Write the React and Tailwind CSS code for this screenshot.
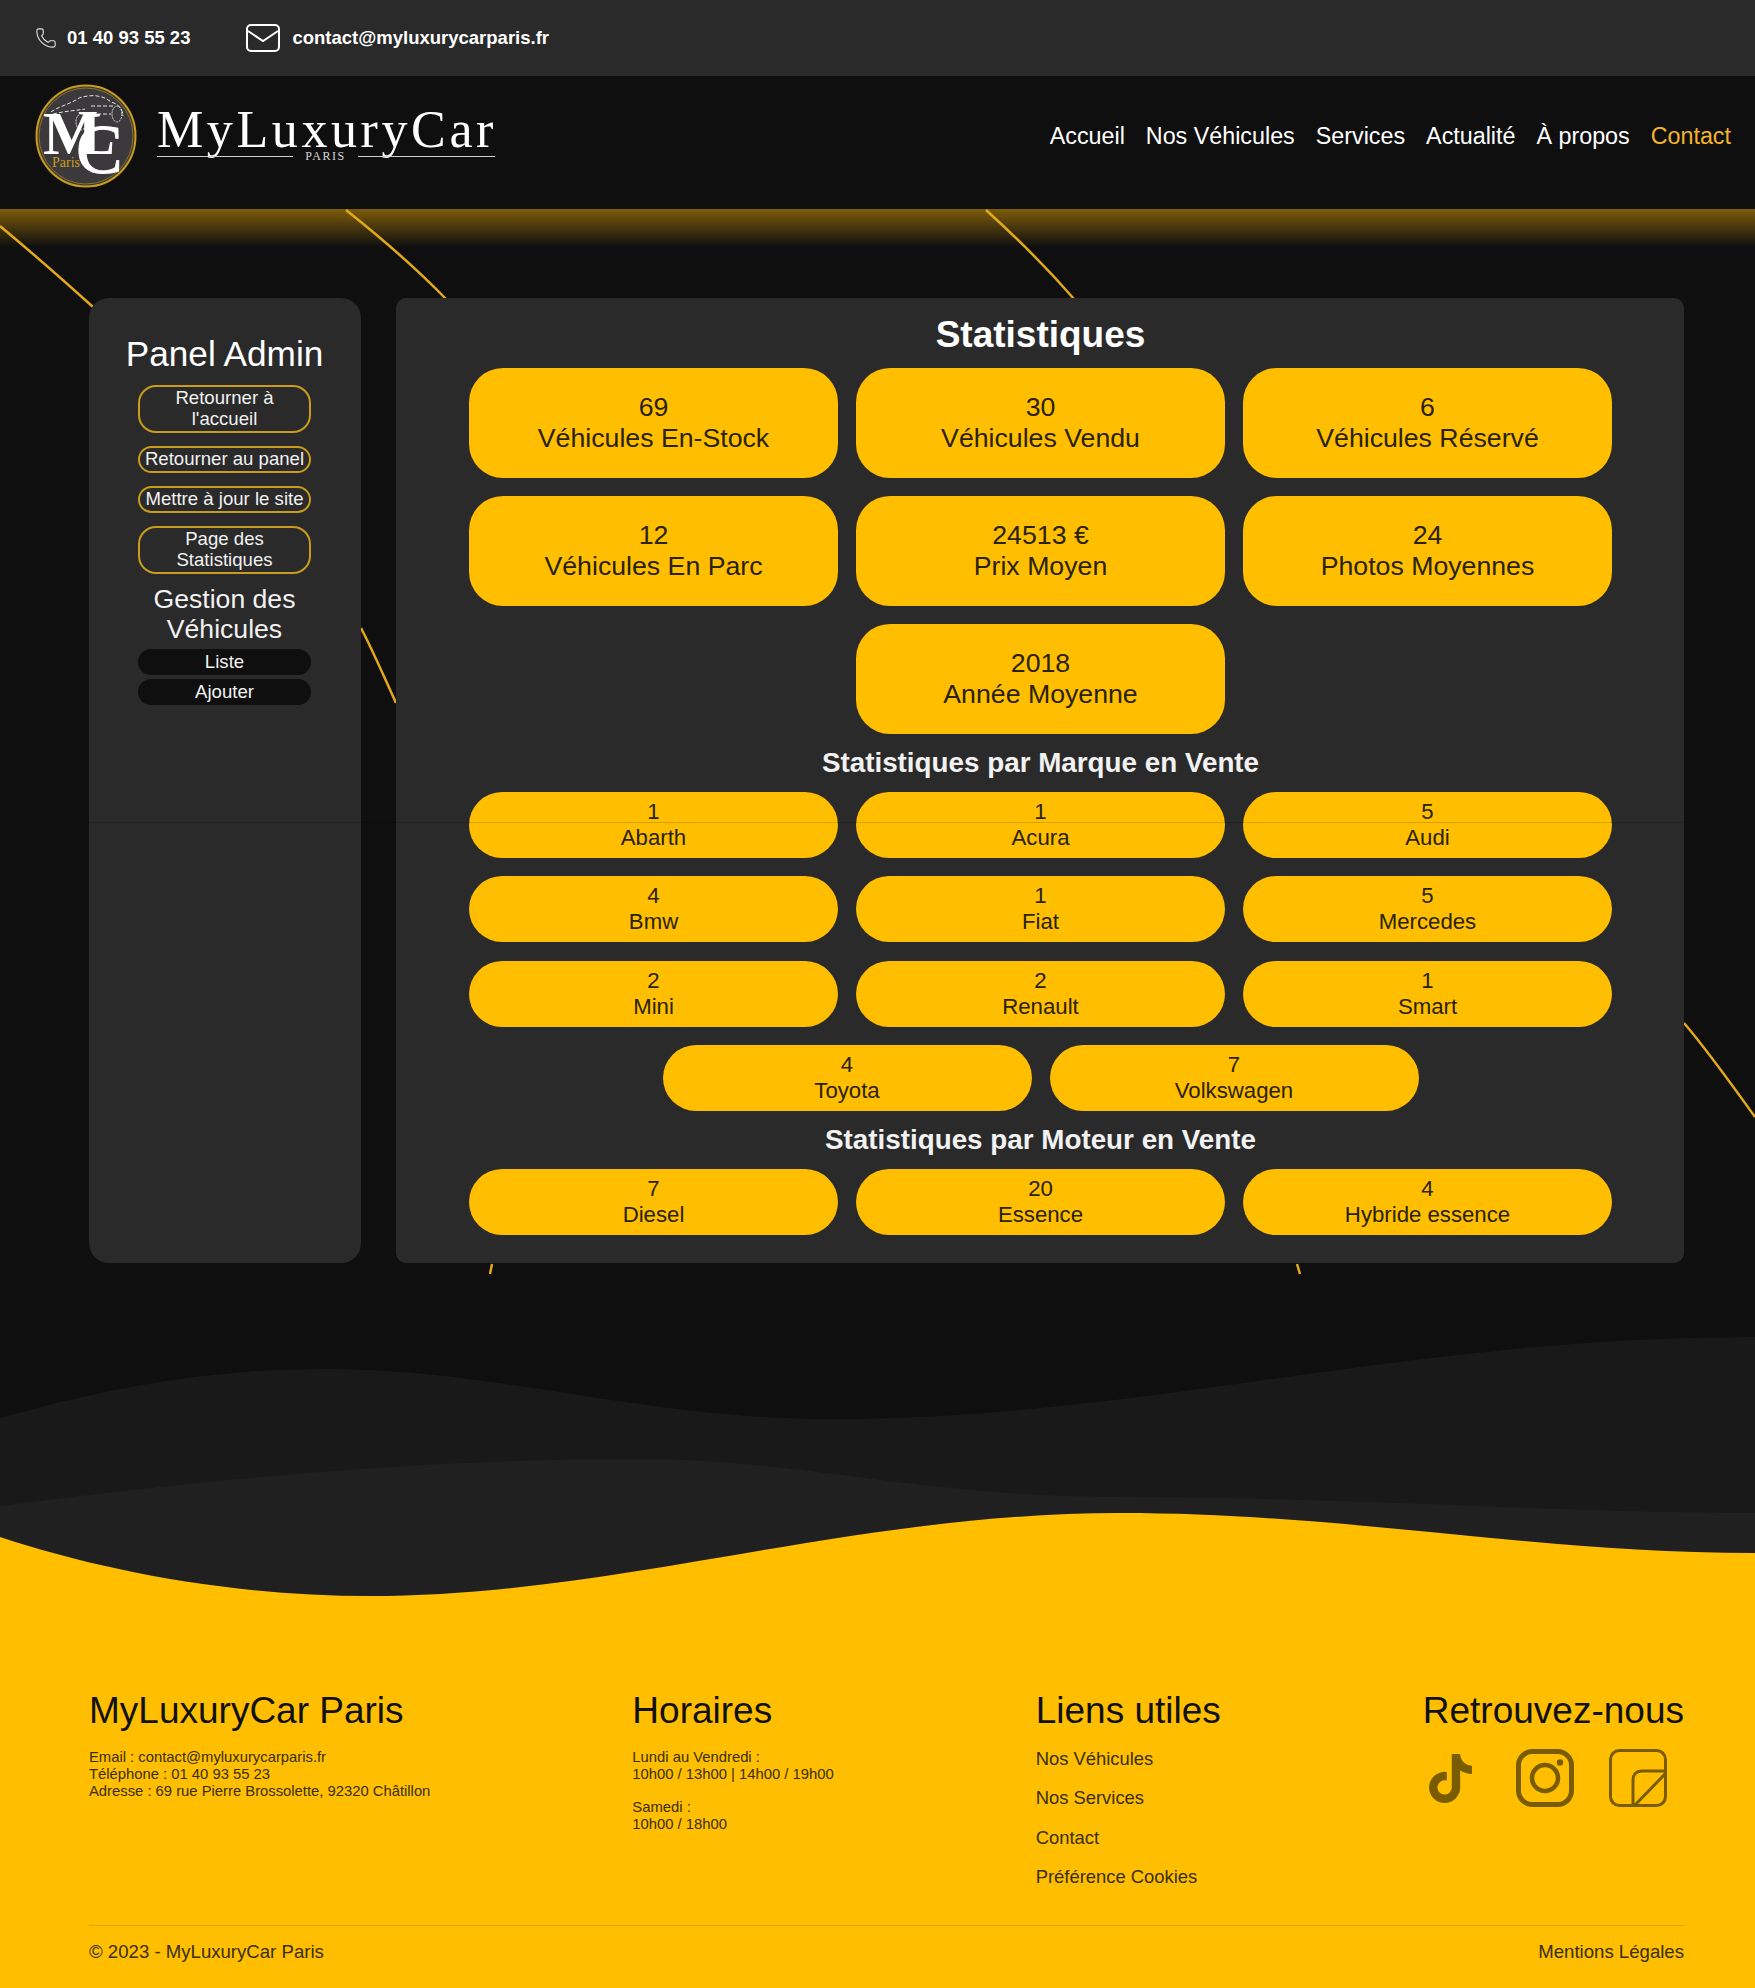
import { Phone } from "lucide-react";
import { FaTiktok } from "react-icons/fa";

const topStats = [
  ["69", "Véhicules En-Stock"],
  ["30", "Véhicules Vendu"],
  ["6", "Véhicules Réservé"],
  ["12", "Véhicules En Parc"],
  ["24513 €", "Prix Moyen"],
  ["24", "Photos Moyennes"],
  ["2018", "Année Moyenne"],
];

const brandStats = [
  ["1", "Abarth"],
  ["1", "Acura"],
  ["5", "Audi"],
  ["4", "Bmw"],
  ["1", "Fiat"],
  ["5", "Mercedes"],
  ["2", "Mini"],
  ["2", "Renault"],
  ["1", "Smart"],
  ["4", "Toyota"],
  ["7", "Volkswagen"],
];

const engineStats = [
  ["7", "Diesel"],
  ["20", "Essence"],
  ["4", "Hybride essence"],
];

const navLinks = ["Accueil", "Nos Véhicules", "Services", "Actualité", "À propos"];
const footerLinks = ["Nos Véhicules", "Nos Services", "Contact", "Préférence Cookies"];

const BigCard = ({ value, label }) => (
  <div className="flex h-[110px] w-[369px] flex-col items-center justify-center rounded-[34px] bg-[#ffbf00] text-[26.7px] leading-[31px] text-[#2a2205]">
    <span>{value}</span>
    <span>{label}</span>
  </div>
);

const SmallCard = ({ value, label }) => (
  <div className="flex h-[66px] w-[369px] flex-col items-center justify-center rounded-[33px] bg-[#ffbf00] text-[22.2px] leading-[26px] text-[#2a2205]">
    <span>{value}</span>
    <span>{label}</span>
  </div>
);

const OutlineButton = ({ children }) => (
  <div className="w-full whitespace-nowrap rounded-[18px] border-2 border-[#c99c1e] pb-[2px] text-center text-[18.6px] leading-[21px] text-[#f2f2f2]">
    {children}
  </div>
);

const DarkButton = ({ children }) => (
  <div className="flex h-[26px] w-full items-center justify-center rounded-[13px] bg-[#0f0f0f] text-[18.6px] text-[#f2f2f2]">
    {children}
  </div>
);

const Logo = () => (
  <div className="flex items-center">
    <svg width="102" height="104" viewBox="0 0 102 104" className="shrink-0">
      <ellipse cx="51" cy="52" rx="49.5" ry="50.5" fill="#3b393b" stroke="#c99c1e" strokeWidth="2" />
      <ellipse cx="51" cy="52" rx="47" ry="48" fill="none" stroke="#8f7220" strokeWidth="1" />
      <path
        d="M16 28 C24 22 36 20 44 14 C56 10 68 11 76 18 C84 20 88 26 88 32 M18 30 C30 27 38 27 50 25 M56 22 H80 M62 30 H76"
        fill="none"
        stroke="#e8e8e8"
        strokeWidth="1"
        strokeDasharray="4 2"
      />
      <ellipse cx="82" cy="30" rx="5" ry="8" fill="none" stroke="#e8e8e8" strokeWidth="1" strokeDasharray="2 1" />
      <ellipse cx="46" cy="38" rx="5" ry="8" fill="none" stroke="#e8e8e8" strokeWidth="1" strokeDasharray="2 1" />
      <text x="17" y="83" fontFamily="'Liberation Serif', serif" fontSize="14" fill="#c99c1e">
        Paris
      </text>
      <text x="42" y="70" fontFamily="'Liberation Serif', serif" fontSize="64" fill="#fff">
        L
      </text>
      <text x="8" y="70" fontFamily="'Liberation Serif', serif" fontSize="62" fontWeight="700" fill="#fff">
        M
      </text>
      <text x="41" y="89" fontFamily="'Liberation Serif', serif" fontSize="70" fill="#fff" stroke="#fff" strokeWidth="0.8">
        C
      </text>
    </svg>
    <div className="ml-[20px] flex w-[338px] flex-col font-['Liberation_Serif',serif] text-white">
      <span className="-mt-[1px] whitespace-nowrap text-[52px] leading-[41px] tracking-[3.6px]">MyLuxuryCar</span>
      <div className="flex items-center">
        <span className="h-px w-[136px] bg-[#cfcfcf]" />
        <span className="flex-1 text-center text-[12px] leading-[12px] tracking-[1.5px] text-[#d8d8d8]">PARIS</span>
        <span className="h-px w-[137px] bg-[#cfcfcf]" />
      </div>
    </div>
  </div>
);

const StickyIcon = () => (
  <svg width="59" height="58" viewBox="0 0 59 58" fill="none" stroke="#7a5c00" strokeWidth="3" strokeLinecap="round" strokeLinejoin="round">
    <rect x="1.5" y="1.5" width="55" height="55" rx="9" />
    <path d="M24 56 V31 C24 26 27 22 33 22 H55" />
    <path d="M26 56 L56 25" />
  </svg>
);

const InstagramIcon = () => (
  <svg width="58" height="58" viewBox="0 0 58 58" fill="none" stroke="#7a5c00" strokeWidth="5">
    <rect x="2.5" y="2.5" width="53" height="53" rx="14" />
    <circle cx="29" cy="29" r="13" strokeWidth="4.5" />
    <circle cx="44" cy="13.5" r="3.2" fill="#7a5c00" stroke="none" />
  </svg>
);

const App = () => {
  return (
    <div className="relative min-h-[1988px] overflow-hidden bg-[#0f0f0f] font-['Liberation_Sans',sans-serif]">
      {/* top contact bar */}
      <div className="flex h-[76px] items-center bg-[#2a2a2a] pl-[35px] text-[18.5px] font-bold text-white">
        <Phone size={22} strokeWidth={1.2} className="text-[#e6e6e6]" />
        <span className="ml-[10px]">01 40 93 55 23</span>
        <svg width="34" height="28" viewBox="0 0 34 28" fill="none" stroke="#fff" strokeWidth="2" className="ml-[56px]">
          <rect x="1" y="1" width="32" height="26" rx="4" />
          <path d="M2 7 L17 17 L32 7" />
        </svg>
        <span className="ml-[12px]">contact@myluxurycarparis.fr</span>
      </div>

      {/* header */}
      <header className="flex h-[133px] items-center justify-between bg-[#0f0f0f] pl-[35px] pr-[24px]">
        <div className="-mt-[13px]">
          <Logo />
        </div>
        <nav className="-mt-[12px] flex gap-[21px] text-[23.3px] text-white">
          {navLinks.map((link) => (
            <span key={link}>{link}</span>
          ))}
          <span className="text-[#f5b52c]">Contact</span>
        </nav>
      </header>

      {/* main content */}
      <main className="relative flex items-start gap-[35px] pb-[74px] pl-[89px] pr-[71px] pt-[89px]">
        <div className="absolute inset-x-0 top-0 h-[38px] bg-gradient-to-b from-[#7d5c0a] to-transparent" />
        <svg className="absolute left-0 top-0" width="1755" height="1129" fill="none" stroke="#e2a918" strokeWidth="2.5">
          <path d="M0 17 C30 42 62 70 93 98" />
          <path d="M346 1 C380 28 415 58 446 90" />
          <path d="M986 1 C1018 30 1048 60 1074 90" />
          <path d="M361 419 C374 444 385 470 396 494" />
          <path d="M1684 814 C1708 842 1732 876 1755 908" />
          <path d="M492 1055 L490 1065" />
          <path d="M1297 1055 L1300 1065" />
        </svg>

        <aside className="relative flex h-[965px] w-[272px] shrink-0 flex-col items-center rounded-[20px] bg-[#2a2a2a] pl-[49px] pr-[50px] pt-[36px]">
          <h2 className="whitespace-nowrap text-[35.2px] leading-[40px] text-white">Panel Admin</h2>
          <div className="mt-[11px] flex w-full flex-col gap-[13px]">
            <OutlineButton>
              Retourner à
              <br />
              l'accueil
            </OutlineButton>
            <OutlineButton>Retourner au panel</OutlineButton>
            <OutlineButton>Mettre à jour le site</OutlineButton>
            <OutlineButton>
              Page des
              <br />
              Statistiques
            </OutlineButton>
          </div>
          <h3 className="mt-[10px] text-center text-[26.6px] leading-[30px] text-[#f2f2f2]">Gestion des Véhicules</h3>
          <div className="mt-[5px] flex w-full flex-col gap-[4px]">
            <DarkButton>Liste</DarkButton>
            <DarkButton>Ajouter</DarkButton>
          </div>
        </aside>

        <section className="relative flex h-[965px] flex-1 flex-col items-center rounded-[10px] bg-[#2a2a2a] pl-[73px] pr-[72px] pt-[16px]">
          <h1 className="text-[37px] font-bold leading-[42px] text-white">Statistiques</h1>
          <div className="mt-[12px] flex flex-wrap justify-center gap-[18px]">
            {topStats.map(([value, label]) => (
              <BigCard key={label} value={value} label={label} />
            ))}
          </div>
          <h2 className="mt-[13px] text-[27.8px] font-bold leading-[32px] text-[#f2f2f2]">Statistiques par Marque en Vente</h2>
          <div className="mt-[13px] flex flex-wrap justify-center gap-x-[18px] gap-y-[18.4px]">
            {brandStats.map(([value, label]) => (
              <SmallCard key={label} value={value} label={label} />
            ))}
          </div>
          <h2 className="mt-[13px] text-[27.8px] font-bold leading-[32px] text-[#f2f2f2]">Statistiques par Moteur en Vente</h2>
          <div className="mt-[13px] flex flex-wrap justify-center gap-[18px]">
            {engineStats.map(([value, label]) => (
              <SmallCard key={label} value={value} label={label} />
            ))}
          </div>
        </section>
      </main>

      {/* waves above the footer */}
      <svg viewBox="0 0 1755 340" preserveAspectRatio="none" className="block h-[340px] w-full">
        <path
          d="M0 81 C110 50 210 32 325 32 C500 32 640 82 829 82 C1150 82 1400 0 1755 0 V340 H0 Z"
          fill="#191919"
        />
        <path
          d="M0 169 C240 138 440 122 638 122 C800 122 920 160 1120 160 C1350 160 1560 176 1755 176 V340 H0 Z"
          fill="#202020"
        />
        <path
          d="M0 200 C100 233 230 259 370 259 C620 259 850 176 1120 176 C1350 176 1530 216 1755 216 V340 H0 Z"
          fill="#ffbf00"
        />
      </svg>

      {/* footer */}
      <footer className="bg-[#ffbf00] pb-[26px] pl-[89px] pr-[71px] pt-[13px] text-[#3a2e08]">
        <div className="flex justify-between">
          <div>
            <h3 className="text-[37px] leading-[41px] text-[#111]">MyLuxuryCar Paris</h3>
            <p className="mt-[18px] text-[14.8px] leading-[16.8px]">
              Email : contact@myluxurycarparis.fr
              <br />
              Téléphone : 01 40 93 55 23
              <br />
              Adresse : 69 rue Pierre Brossolette, 92320 Châtillon
            </p>
          </div>
          <div>
            <h3 className="text-[37px] leading-[41px] text-[#111]">Horaires</h3>
            <p className="mt-[18px] text-[14.8px] leading-[16.8px]">
              Lundi au Vendredi :
              <br />
              10h00 / 13h00 | 14h00 / 19h00
              <br />
              <br />
              Samedi :
              <br />
              10h00 / 18h00
            </p>
          </div>
          <div>
            <h3 className="text-[37px] leading-[41px] text-[#111]">Liens utiles</h3>
            <ul className="mt-[18px] flex flex-col gap-[19.3px] text-[18.4px] leading-[20px]">
              {footerLinks.map((link) => (
                <li key={link}>{link}</li>
              ))}
            </ul>
          </div>
          <div>
            <h3 className="text-[37px] leading-[41px] text-[#111]">Retrouvez-nous</h3>
            <div className="mt-[18px] flex items-center">
              <FaTiktok className="ml-[6px] h-[49px] w-[43px] text-[#7a5c00]" />
              <div className="ml-[44px]">
                <InstagramIcon />
              </div>
              <div className="ml-[35px]">
                <StickyIcon />
              </div>
            </div>
          </div>
        </div>
        <div className="mt-[38px] flex justify-between border-t border-[#d9a300] pt-[16px] text-[18.6px] leading-[20px]">
          <span>© 2023 - MyLuxuryCar Paris</span>
          <span>Mentions Légales</span>
        </div>
      </footer>

      {/* faint seam across the panels */}
      <div className="absolute left-[89px] right-[71px] top-[822px] h-px bg-black/15" />
    </div>
  );
};

export default App;
